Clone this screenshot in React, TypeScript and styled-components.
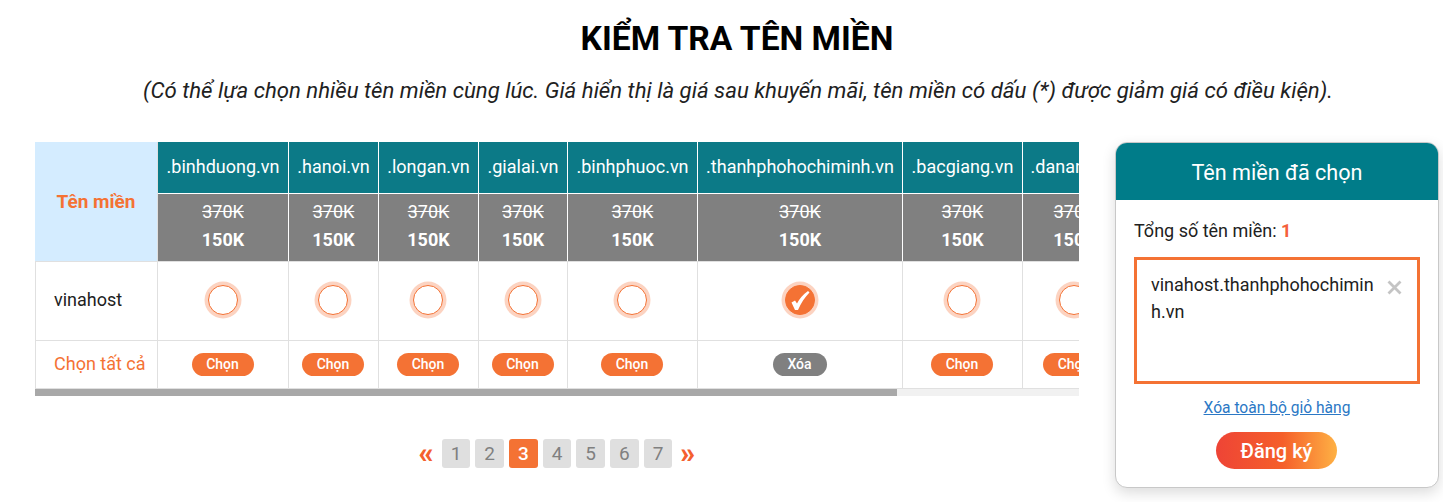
import React from "react";
import styled, { createGlobalStyle } from "styled-components";

const Global = createGlobalStyle`
  html, body { margin: 0; padding: 0; background: #fff; overflow: hidden; }
  body { font-family: Roboto, "Noto Sans", sans-serif; color: #212121; }
  * { box-sizing: border-box; }
`;

const Page = styled.div`
  width: 1443px;
  height: 502px;
  padding: 16px 4px 0 35px;
`;
const Title = styled.h1`
  margin: 0 0 0 -35px;
  width: 1474px;
  text-align: center;
  font-size: 33.6px;
  line-height: 46px;
  font-weight: 700;
  color: #000;
`;
const Subtitle = styled.p`
  margin: 13px 0 0 -35px;
  width: 1476px;
  text-align: center;
  font-size: 22.2px;
  line-height: 30px;
  font-style: italic;
  color: #212121;
`;
const Columns = styled.div`
  display: flex;
  justify-content: space-between;
  margin-top: 37px;
`;
const Left = styled.div`
  width: 1044px;
`;
const Scroller = styled.div`
  width: 1044px;
  overflow: hidden;
`;
const ScrollTrack = styled.div`
  height: 7px;
  background: #f1f1f1;
`;
const ScrollThumb = styled.div`
  width: 862px;
  height: 100%;
  background: #a8a8a8;
`;
const Table = styled.table`
  table-layout: fixed;
  width: 1264px;
  border-collapse: separate;
  border-spacing: 0;
  font-size: 18px;
`;
const DomainHead = styled.th`
  height: 52px;
  padding: 0 0 2px;
  background: #0c7a87;
  color: #fff;
  font-weight: 400;
  font-size: 18px;
  white-space: nowrap;
  text-align: center;
  border-right: 1px solid #fff;
  border-bottom: 1px solid #fff;
`;
const CornerHead = styled.th`
  background: #d4ecff;
  color: #f47234;
  font-size: 19px;
  font-weight: 700;
  text-align: center;
  padding: 0 0 1px;
  border-right: 1px solid #e0e0e0;
`;
const PriceCell = styled.td`
  height: 67px;
  padding: 0 0 3px;
  background: #808080;
  color: #fff;
  text-align: center;
  border-right: 1px solid #fff;
  font-size: 18px;
  line-height: 28px;
`;
const OldPrice = styled.div`
  text-decoration: line-through;
`;
const NewPrice = styled.div`
  font-weight: 700;
`;
const RowLabel = styled.td`
  padding: 0 0 3px 18px;
  font-size: 18px;
  color: #212121;
  border-left: 1px solid #e0e0e0;
  border-right: 1px solid #e0e0e0;
  border-top: 1px solid #e0e0e0;
`;
const ActionLabel = styled(RowLabel)`
  color: #f47234;
  white-space: nowrap;
  padding: 0 0 2px 18px;
  border-bottom: 1px solid #e0e0e0;
`;
const Cell = styled.td`
  height: 79px;
  padding: 0;
  text-align: center;
  border-right: 1px solid #e0e0e0;
  border-top: 1px solid #e0e0e0;
`;
const ActionCell = styled(Cell)`
  height: 49px;
  padding: 0 1px 1px 0;
  border-bottom: 1px solid #e0e0e0;
`;
const Radio = styled.span<{ $checked: boolean }>`
  display: inline-flex;
  align-items: center;
  justify-content: center;
  width: 30px;
  height: 30px;
  margin: -2px 1px 0 0;
  border-radius: 50%;
  vertical-align: middle;
  border: 1px solid #f47234;
  background: ${(p) => (p.$checked ? "#f47234" : "#fff")};
  box-shadow: 0 0 0 3.5px #fcd3c1;
`;
const Pill = styled.span<{ $remove: boolean }>`
  display: inline-block;
  min-width: ${(p) => (p.$remove ? "54px" : "62px")};
  height: 23px;
  padding: 0 14px;
  border-radius: 12px;
  background: ${(p) => (p.$remove ? "#808080" : "#f47234")};
  color: #fff;
  font-size: 14px;
  font-weight: 500;
  line-height: 23px;
  vertical-align: middle;
`;
const Pager = styled.nav`
  display: flex;
  justify-content: center;
  align-items: center;
  gap: 5px;
  margin-top: 43px;
`;
const PageBox = styled.span<{ $active: boolean }>`
  width: 28.67px;
  height: 29px;
  border-radius: 3px;
  display: flex;
  align-items: center;
  justify-content: center;
  background: ${(p) => (p.$active ? "#f47234" : "#dfdfdf")};
  color: ${(p) => (p.$active ? "#fff" : "#808080")};
  font-size: 19px;
  font-weight: ${(p) => (p.$active ? 500 : 400)};
`;
const Arrow = styled.span`
  color: #f4602f;
  font-size: 29px;
  line-height: 29px;
  font-weight: 900;
  width: 17px;
  margin: 0 2px 0 0;
  text-align: center;
`;
const ArrowRight = styled(Arrow)`
  margin: 0 0 0 2px;
`;
const Panel = styled.aside`
  width: 324px;
  height: 346px;
  border: 1px solid #c8c8c8;
  border-radius: 12px;
  overflow: hidden;
  background: #fff;
  box-shadow: 0 5px 14px rgba(0, 0, 0, 0.14);
`;
const PanelHead = styled.div`
  height: 57px;
  background: #007c89;
  color: #fff;
  font-size: 21.6px;
  line-height: 59px;
  text-align: center;
`;
const PanelBody = styled.div`
  padding: 18px 18px 0;
`;
const Total = styled.div`
  font-size: 18px;
  line-height: 26px;
  color: #212121;
`;
const Count = styled.span`
  color: #f4603a;
  font-weight: 700;
`;
const CartBox = styled.div`
  display: flex;
  justify-content: space-between;
  align-items: flex-start;
  height: 127px;
  margin-top: 13px;
  padding: 11px 14px 0 14px;
  border: 3px solid #f47234;
`;
const CartName = styled.div`
  width: 226px;
  font-size: 18px;
  line-height: 27px;
  word-break: break-all;
  color: #212121;
`;
const Remove = styled.svg`
  width: 15px;
  height: 15px;
  margin: 9px 1px 0 0;
`;
const ClearLink = styled.a`
  display: block;
  margin-top: 14px;
  text-align: center;
  font-size: 15.6px;
  line-height: 20px;
  color: #2b78c5;
  text-decoration: underline;
`;
const Submit = styled.button`
  display: block;
  width: 121px;
  height: 37px;
  margin: 14px 0 0 82px;
  padding: 0;
  border: 0;
  border-radius: 19px;
  background: linear-gradient(90deg, #ee4436 0%, #f55f2a 55%, #feb144 100%);
  color: #fff;
  font: 500 20px Roboto, sans-serif;
`;

const cols = [
  { name: ".binhduong.vn", w: 131 },
  { name: ".hanoi.vn", w: 90 },
  { name: ".longan.vn", w: 100 },
  { name: ".gialai.vn", w: 89 },
  { name: ".binhphuoc.vn", w: 130 },
  { name: ".thanhphohochiminh.vn", w: 205 },
  { name: ".bacgiang.vn", w: 120 },
  { name: ".danang.vn", w: 104 },
  { name: ".dongnai.vn", w: 172 },
];

const Check = () => (
  <svg width="24" height="24" viewBox="0 0 24 24" aria-hidden="true">
    <path d="M3.5 14.5 L7 12.5 L9 15.5 C11.5 10.5 15 6.5 20 3 L21.5 4.5 C17 9 13 15 10 22 L7 22 Z" fill="#fff" />
  </svg>
);

export default function App() {
  const selected = 5;
  return (
    <Page>
      <Global />
      <Title>KIỂM TRA TÊN MIỀN</Title>
      <Subtitle>(Có thể lựa chọn nhiều tên miền cùng lúc. Giá hiển thị là giá sau khuyến mãi, tên miền có dấu (*) được giảm giá có điều kiện).</Subtitle>
      <Columns>
        <Left>
          <Scroller>
            <Table>
              <colgroup>
                <col width={123} />
                {cols.map((c) => (
                  <col key={c.name} width={c.w} />
                ))}
              </colgroup>
              <thead>
                <tr>
                  <CornerHead rowSpan={2}>Tên miền</CornerHead>
                  {cols.map((c) => (
                    <DomainHead key={c.name}>{c.name}</DomainHead>
                  ))}
                </tr>
                <tr>
                  {cols.map((c) => (
                    <PriceCell key={c.name}>
                      <OldPrice>370K</OldPrice>
                      <NewPrice>150K</NewPrice>
                    </PriceCell>
                  ))}
                </tr>
              </thead>
              <tbody>
                <tr>
                  <RowLabel>vinahost</RowLabel>
                  {cols.map((c, i) => (
                    <Cell key={c.name}>
                      <Radio $checked={i === selected}>{i === selected && <Check />}</Radio>
                    </Cell>
                  ))}
                </tr>
                <tr>
                  <ActionLabel>Chọn tất cả</ActionLabel>
                  {cols.map((c, i) => (
                    <ActionCell key={c.name}>
                      <Pill $remove={i === selected}>{i === selected ? "Xóa" : "Chọn"}</Pill>
                    </ActionCell>
                  ))}
                </tr>
              </tbody>
            </Table>
          </Scroller>
          <ScrollTrack>
            <ScrollThumb />
          </ScrollTrack>
          <Pager>
            <Arrow>«</Arrow>
            {[1, 2, 3, 4, 5, 6, 7].map((n) => (
              <PageBox key={n} $active={n === 3}>{n}</PageBox>
            ))}
            <ArrowRight>»</ArrowRight>
          </Pager>
        </Left>
        <Panel>
          <PanelHead>Tên miền đã chọn</PanelHead>
          <PanelBody>
            <Total>Tổng số tên miền: <Count>1</Count></Total>
            <CartBox>
              <CartName>vinahost.thanhphohochiminh.vn</CartName>
              <Remove viewBox="0 0 15 15" aria-hidden="true">
                <path d="M1.5 1.5 L13.5 13.5 M13.5 1.5 L1.5 13.5" stroke="#c4c4c4" strokeWidth="2.8" fill="none" />
              </Remove>
            </CartBox>
            <ClearLink href="#">Xóa toàn bộ giỏ hàng</ClearLink>
            <Submit>Đăng ký</Submit>
          </PanelBody>
        </Panel>
      </Columns>
    </Page>
  );
}
